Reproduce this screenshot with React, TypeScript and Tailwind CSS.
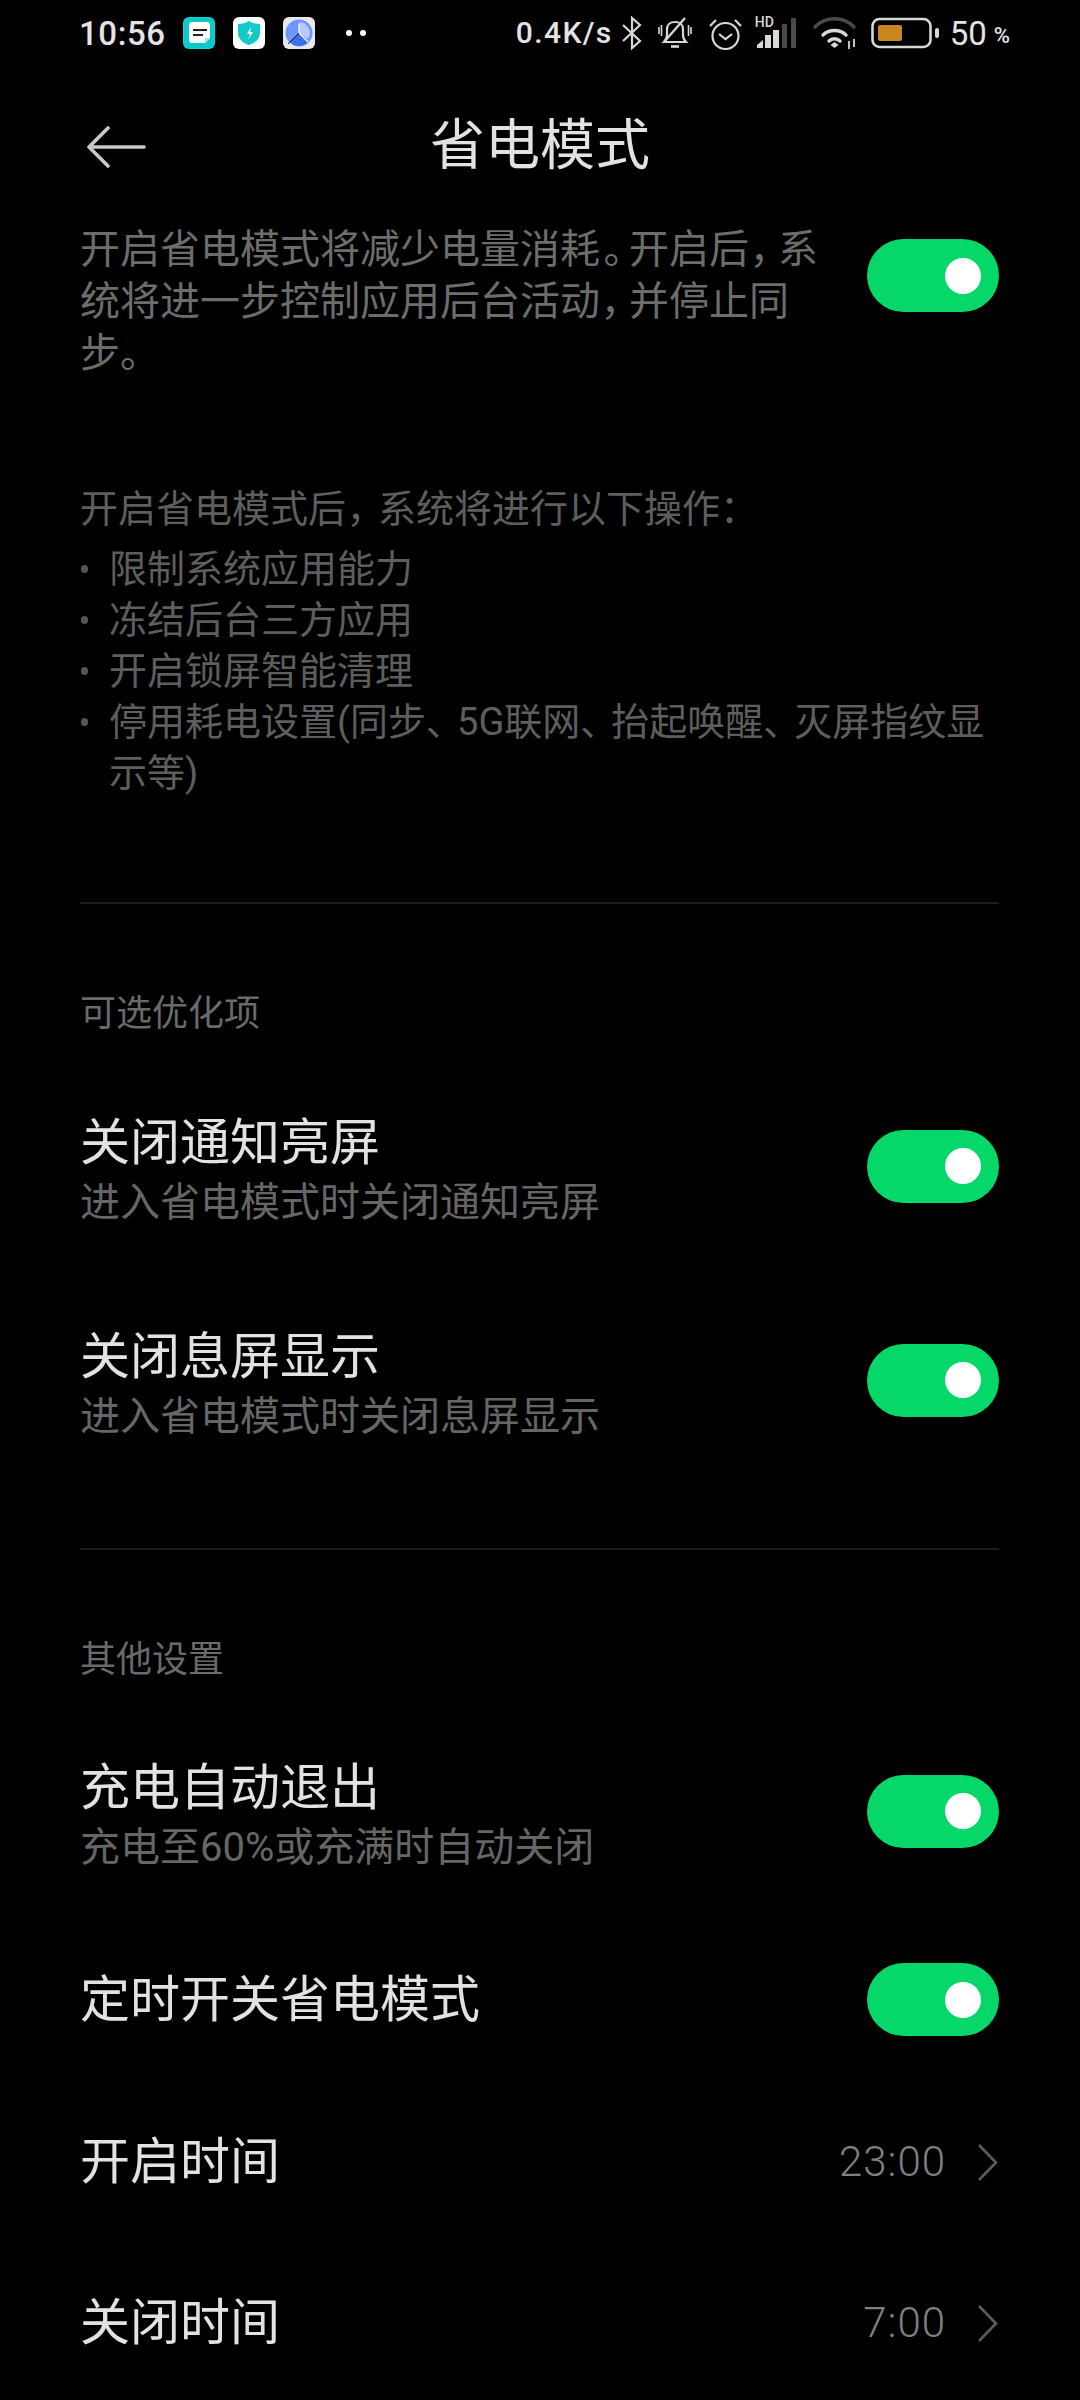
import React from "react";

const FONT = "font-['Roboto','Noto_Sans_CJK_SC',sans-serif]";

function Toggle() {
  return (
    <div className="flex items-center justify-end w-[132px] h-[73px] rounded-full bg-[#05d868] pr-[18px] shrink-0">
      <div className="w-[36px] h-[36px] rounded-full bg-white" />
    </div>
  );
}

function NoteIcon() {
  return (
    <svg width="32" height="32" viewBox="0 0 32 32">
      <rect width="32" height="32" rx="6" fill="#0fd6d6" />
      <rect x="1" y="1" width="30" height="30" rx="5" fill="#0bc9c9" />
      <path d="M6 8a3 3 0 0 1 3-3h15a3 3 0 0 1 3 3v13l-5 5H9a3 3 0 0 1-3-3z" fill="#fff" />
      <path d="M22 26l5-5h-5z" fill="#9be8e8" />
      <path d="M10 13h14M10 18h10" stroke="#222" strokeWidth="2" />
    </svg>
  );
}

function ShieldIcon() {
  return (
    <svg width="32" height="32" viewBox="0 0 32 32">
      <rect width="32" height="32" rx="6" fill="#fff" />
      <path d="M5 7c4 0 8-1 11-3 3 2 7 3 11 3v9c0 6-5 10-11 12C10 26 5 22 5 16z" fill="#13c9c9" />
      <path d="M18 10l-4 7h3l-2 6 5-8h-3z" fill="#fff" />
    </svg>
  );
}

function ClockIcon() {
  return (
    <svg width="32" height="32" viewBox="0 0 32 32">
      <rect width="32" height="32" rx="6" fill="#e8e8ec" />
      <circle cx="16" cy="16" r="13.5" fill="#6e96ff" />
      <path d="M16 16V5a11 11 0 0 1 9 17z" fill="#b9c8ff" />
      <path d="M16 16l9.5 9A13 13 0 0 1 7 25z" fill="#3a70ea" />
      <path d="M16 16V7M16 16l9 9" stroke="#fff" strokeWidth="1.2" />
      <path d="M16 16L5 27" stroke="#111" strokeWidth="1" />
    </svg>
  );
}

function SignalIcon() {
  return (
    <div className="relative ml-[12px] w-[42px] h-[32px]">
      <span className="absolute left-0 top-0 text-[14px] leading-[11px] font-medium text-[#d8d8d8]">HD</span>
      <svg className="absolute left-0 top-0" width="42" height="32" viewBox="0 0 42 32">
        <path d="M2 31v-3l6-5v8z" fill="#d8d8d8" />
        <rect x="10" y="18" width="6" height="13" fill="#d8d8d8" />
        <rect x="18" y="13" width="6" height="18" fill="#d8d8d8" />
        <rect x="27" y="7" width="5" height="24" fill="#4a4a4a" />
        <rect x="36" y="1" width="5" height="30" fill="#4a4a4a" />
      </svg>
    </div>
  );
}

function WifiIcon() {
  return (
    <svg className="ml-[16px]" width="43" height="32" viewBox="0 0 43 32" fill="none" strokeWidth="3.4" strokeLinecap="round">
      <path d="M2 10C12 -1 31 -1 41 10" stroke="#4a4a4a" />
      <path d="M10 18c6-6 17-6 23 0" stroke="#d8d8d8" />
      <path d="M16 24c3-3 8-3 11 0" stroke="#d8d8d8" />
      <path d="M17.5 28l4-3 4 3-4 3z" fill="#d8d8d8" stroke="none" />
      <path d="M36 24v8M41 22v8" stroke="#d8d8d8" strokeWidth="1.8" strokeLinecap="butt" />
    </svg>
  );
}

function StatusRight() {
  return (
    <div className="flex items-center">
      <span className="text-[30px] leading-none font-medium text-[#e4e4e4] tracking-[1.4px]">0.4K/s</span>
      {/* bluetooth */}
      <svg className="ml-[9px]" width="20" height="34" viewBox="0 0 20 34" fill="none" stroke="#d8d8d8" strokeWidth="2.2">
        <path d="M1 9l17 16-8 7V2l8 7L1 25" />
      </svg>
      {/* muted bell */}
      <svg className="ml-[16px]" width="34" height="32" viewBox="0 0 34 32" fill="none" stroke="#d8d8d8" strokeWidth="2.2">
        <path d="M6 25h22c-2-2-3-4-3-7v-6c0-4-3-7-8-7s-8 3-8 7v6c0 3-1 5-3 7z" />
        <path d="M13 29.5h8" strokeWidth="2.6" />
        <path d="M27 1L6 25" />
        <path d="M1 10v7M33 10v7M3.5 8v11M30.5 8v11" strokeWidth="1.6" />
      </svg>
      {/* alarm */}
      <svg className="ml-[16px]" width="35" height="33" viewBox="0 0 35 33" fill="none" stroke="#d8d8d8" strokeWidth="2.2">
        <circle cx="17.5" cy="19" r="13" />
        <path d="M11 17l6.5 5 6.5-5" />
        <path d="M2 9l6-6M33 9l-6-6" />
      </svg>
      <SignalIcon />
      <WifiIcon />
      {/* battery */}
      <svg className="ml-[15px]" width="69" height="32" viewBox="0 0 69 32" fill="none">
        <rect x="1.5" y="2" width="58" height="28" rx="7" stroke="#d8d8d8" strokeWidth="2.6" />
        <rect x="7" y="8" width="24" height="16" rx="2" fill="#c8871e" />
        <rect x="64" y="11" width="4" height="10" rx="2" fill="#d8d8d8" />
      </svg>
      <span className="ml-[10px] text-[33px] leading-none text-[#e4e4e4]">50</span>
      <span className="ml-[7px] mt-[6px] text-[22px] leading-none font-medium text-[#e4e4e4]">%</span>
    </div>
  );
}

function StatusBar() {
  return (
    <div className="flex items-center justify-between h-[66px] pl-[79px] pr-[70px]">
      <div className="flex items-center">
        <span className="text-[33px] leading-none font-medium text-[#e4e4e4] tracking-[0.6px] w-[85px]">10:56</span>
        <div className="flex items-center gap-[18px] ml-[19px]">
          <NoteIcon />
          <ShieldIcon />
          <ClockIcon />
        </div>
        <div className="flex items-center gap-[8px] ml-[31px]">
          <span className="w-[6px] h-[6px] rounded-full bg-white" />
          <span className="w-[6px] h-[6px] rounded-full bg-white" />
        </div>
      </div>
      <StatusRight />
    </div>
  );
}

function Header() {
  return (
    <div className="relative flex items-center justify-center h-[158px]">
      <svg className="absolute left-[87px] top-[60px]" width="60" height="42" viewBox="0 0 60 42" fill="none" stroke="#c9c9c9" strokeWidth="3.6" strokeLinecap="round" strokeLinejoin="round">
        <path d="M2 21h55M21 2L2 21l19 19" />
      </svg>
      <h1 className="text-[55px] leading-none font-normal text-[#e2e2e2]">省电模式</h1>
    </div>
  );
}

// punctuation in the reference sits in a narrower slot than a full em
function Comma({ children }: { children: React.ReactNode }) {
  return <span className="pl-[3px] pr-[6px] [font-feature-settings:'palt']">{children}</span>;
}

function Dun() {
  return <span className="pr-[12px] [font-feature-settings:'palt']">、</span>;
}

function Bullet({ children }: { children: React.ReactNode }) {
  return (
    <li className="flex">
      <span className="w-[29px] shrink-0 pt-[21px] pl-[1px]">
        <span className="block w-[7px] h-[8px] rounded-full bg-[#555]" />
      </span>
      <span>{children}</span>
    </li>
  );
}

function SwitchRow({ title, sub, className }: { title: string; sub: string; className: string }) {
  return (
    <div className={"flex items-center justify-between " + className}>
      <div className="pt-[5px]">
        <div className="text-[50px] leading-[60px] text-[#e2e2e2]">{title}</div>
        <div className="mt-[9px] text-[40px] leading-[42px] text-[#666]">{sub}</div>
      </div>
      <Toggle />
    </div>
  );
}

function TimeRow({ title, value, className }: { title: string; value: string; className: string }) {
  return (
    <div className={"flex items-center justify-between " + className}>
      <span className="text-[50px] leading-[60px] text-[#e2e2e2]">{title}</span>
      <div className="flex items-center">
        <span className="text-[42px] leading-none font-light text-[#808080] tracking-[1px]">{value}</span>
        <svg className="ml-[32px] mr-[1px]" width="20" height="37" viewBox="0 0 20 37" fill="none" stroke="#5c5c5c" strokeWidth="2.6">
          <path d="M1 1l17 17.5L1 36" />
        </svg>
      </div>
    </div>
  );
}

export default function App() {
  return (
    <div className={"w-[1080px] h-[2400px] overflow-hidden bg-black " + FONT}>
      <StatusBar />
      <Header />

      <div className="pl-[80px] pr-[81px]">
        <div className="flex items-start justify-between">
          <p className="w-[742px] text-[40px] leading-[52px] text-[#6d6d6d]">
            开启省电模式将减少电量消耗<Comma>。</Comma>开启后<Comma>，</Comma>系<br />
            统将进一步控制应用后台活动<Comma>，</Comma>并停止同<br />
            步。
          </p>
          <div className="mt-[15px]">
            <Toggle />
          </div>
        </div>

        <p className="mt-[103px] text-[38px] leading-[52px] text-[#5e5e5e]">
          开启省电模式后<span className="pl-[3px] pr-[10px] [font-feature-settings:'palt']">，</span>系统将进行以下操作：
        </p>
        <ul className="mt-[9px] text-[38px] leading-[51px] text-[#5e5e5e]">
          <Bullet>限制系统应用能力</Bullet>
          <Bullet>冻结后台三方应用</Bullet>
          <Bullet>开启锁屏智能清理</Bullet>
          <Bullet>
            停用耗电设置(同步<Dun />5G联网<Dun />抬起唤醒<Dun />灭屏指纹显<br />
            示等)
          </Bullet>
        </ul>

        <div className="mt-[103px] h-[2px] bg-[#1c1c1c]" />
        <h2 className="mt-[88px] text-[36px] leading-[44px] font-normal text-[#6a6a6a]">可选优化项</h2>
        <SwitchRow className="mt-[72px]" title="关闭通知亮屏" sub="进入省电模式时关闭通知亮屏" />
        <SwitchRow className="mt-[98px]" title="关闭息屏显示" sub="进入省电模式时关闭息屏显示" />

        <div className="mt-[110px] h-[2px] bg-[#1c1c1c]" />
        <h2 className="mt-[88px] text-[36px] leading-[44px] font-normal text-[#6a6a6a]">其他设置</h2>
        <SwitchRow className="mt-[71px]" title="充电自动退出" sub="充电至60%或充满时自动关闭" />
        <div className="mt-[94px] flex items-center justify-between">
          <span className="text-[50px] leading-[60px] text-[#e2e2e2]">定时开关省电模式</span>
          <Toggle />
        </div>
        <TimeRow className="mt-[96px]" title="开启时间" value="23:00" />
        <TimeRow className="mt-[101px]" title="关闭时间" value="7:00" />
      </div>
    </div>
  );
}
